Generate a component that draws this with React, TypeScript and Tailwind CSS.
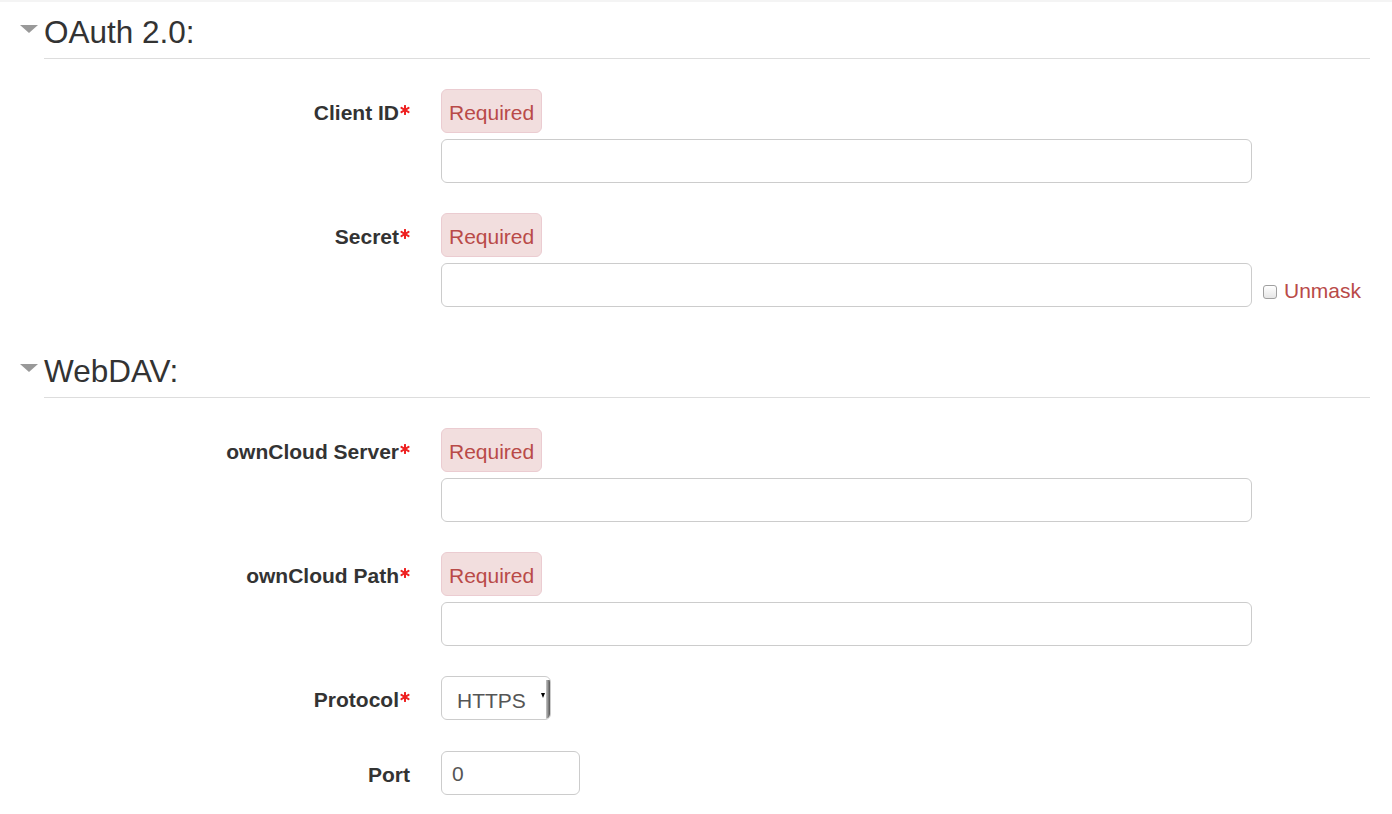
import type { ReactNode } from "react";

function Asterisk() {
  return (
    <svg
      className="relative -top-[4px] ml-[1px] inline-block h-[10px] w-[10px]"
      viewBox="0 0 10 10"
      aria-hidden="true"
    >
      <g stroke="#ee2222" strokeWidth="2" strokeLinecap="round">
        <line x1="5" y1="0.8" x2="5" y2="9.2" />
        <line x1="1.4" y1="2.9" x2="8.6" y2="7.1" />
        <line x1="1.4" y1="7.1" x2="8.6" y2="2.9" />
      </g>
    </svg>
  );
}

function SectionHeader({ title }: { title: string }) {
  return (
    <div className="flex">
      <div className="w-[44px] pl-[20px] pt-[10px]">
        <svg className="h-[8px] w-[18px]" viewBox="0 0 18 8" aria-hidden="true">
          <polygon points="0,0 18,0 9,8" fill="#999999" />
        </svg>
      </div>
      <div className="mr-[22px] flex-1 border-b border-[#dddddd] pb-[8px]">
        <h3 className="text-[31.5px] leading-[35px] font-normal text-[#333333]">
          {title}
        </h3>
      </div>
    </div>
  );
}

function Row({
  label,
  required,
  children,
}: {
  label: string;
  required?: boolean;
  children: ReactNode;
}) {
  return (
    <div className="flex">
      <div className="flex h-[44px] w-[410px] items-center justify-end pt-[4px]">
        <label className="text-[21px] leading-[24px] font-bold whitespace-nowrap text-[#333333]">
          {label}
          {required ? <Asterisk /> : null}
        </label>
      </div>
      <div className="ml-[31px] flex-1">{children}</div>
    </div>
  );
}

function RequiredBadge() {
  return (
    <div className="inline-flex h-[44px] items-center rounded-[6px] border border-[#ebccd1] bg-[#f2dede] px-[7px] pt-[3px] text-[21px] text-[#b94a48]">
      Required
    </div>
  );
}

function TextInput({ value = "", width = "w-[811px]" }: { value?: string; width?: string }) {
  return (
    <input
      readOnly
      value={value}
      className={`h-[44px] ${width} rounded-[6px] border border-[#cccccc] bg-white px-[10px] pt-[2px] text-[21px] text-[#555555] outline-none`}
    />
  );
}

export default function App() {
  return (
    <div className="h-[814px] w-full overflow-hidden border-t-2 border-[#f4f4f4] bg-white font-['Liberation_Sans',Arial,sans-serif]">
      <div className="pt-[13px]">
        <SectionHeader title="OAuth 2.0:" />
        <div className="mt-[30px] flex flex-col gap-[30px]">
          <Row label="Client ID" required>
            <RequiredBadge />
            <div className="mt-[6px]">
              <TextInput />
            </div>
          </Row>
          <Row label="Secret" required>
            <RequiredBadge />
            <div className="mt-[6px] flex items-end">
              <TextInput />
              <label className="ml-[11px] mb-[4px] flex items-center gap-[7px] text-[21px] leading-[24px] text-[#b94a48]">
                <span className="mt-[1px] h-[14px] w-[14px] rounded-[3px] border border-[#a0a0a0] bg-gradient-to-b from-white to-[#e6e6e6]" />
                Unmask
              </label>
            </div>
          </Row>
        </div>
      </div>

      <div className="mt-[47px]">
        <SectionHeader title="WebDAV:" />
        <div className="mt-[30px] flex flex-col gap-[30px]">
          <Row label="ownCloud Server" required>
            <RequiredBadge />
            <div className="mt-[6px]">
              <TextInput />
            </div>
          </Row>
          <Row label="ownCloud Path" required>
            <RequiredBadge />
            <div className="mt-[6px]">
              <TextInput />
            </div>
          </Row>
          <Row label="Protocol" required>
            <div className="relative flex h-[44px] w-[110px] items-center overflow-hidden rounded-[6px] border border-[#cccccc] bg-white pl-[15px] pt-[5px] text-[21px] text-[#555555]">
              HTTPS
              <span className="absolute right-[5px] top-[16px] h-0 w-0 border-x-[2px] border-t-[5px] border-x-transparent border-t-black" />
              <span className="absolute right-0 top-[3px] bottom-0 w-[4px] rounded-br-[5px] bg-gradient-to-r from-[#c8c8c8] to-[#555555]" />
            </div>
          </Row>
          <div className="mt-[1px]">
            <Row label="Port">
              <TextInput value="0" width="w-[139px]" />
            </Row>
          </div>
        </div>
      </div>
    </div>
  );
}
